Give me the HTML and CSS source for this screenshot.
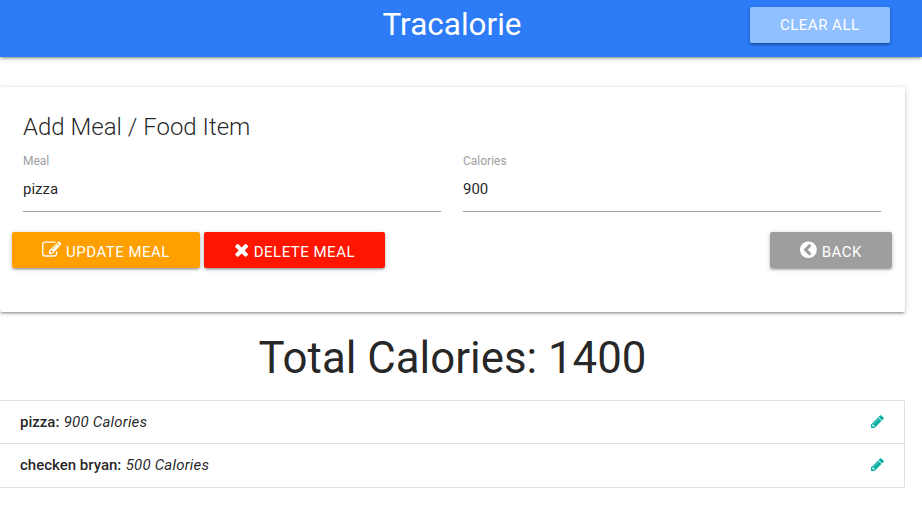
FILE: index.html
```html
<!DOCTYPE html>
<html lang="en">
<head>
<meta charset="utf-8">
<title>Tracalorie</title>
<link rel="stylesheet" href="styles.css">
</head>
<body>
<nav class="navbar">
  <span class="brand">Tracalorie</span>
  <a class="btn btn-clear">Clear All</a>
</nav>
<main class="container">
  <section class="card">
    <h1 class="card-title">Add Meal / Food Item</h1>
    <form class="fields">
      <div class="field">
        <label for="meal">Meal</label>
        <input id="meal" type="text" value="pizza">
      </div>
      <div class="field">
        <label for="calories">Calories</label>
        <input id="calories" type="text" value="900">
      </div>
    </form>
    <div class="actions">
      <a class="btn btn-update"><svg class="icon" viewBox="0 0 1792 1792"><path d="M888 1184l116-116-152-152-116 116v56h96v96h56zm440-720q-16-16-33 1l-350 350q-17 17-1 33t33-1l350-350q17-17 1-33zm80 594v190q0 119-84.5 203.5t-203.5 84.5h-832q-119 0-203.5-84.5t-84.5-203.5v-832q0-119 84.5-203.5t203.5-84.5h832q63 0 117 25 15 7 18 23 3 17-9 29l-49 49q-14 14-32 8-23-6-45-6h-832q-66 0-113 47t-47 113v832q0 66 47 113t113 47h832q66 0 113-47t47-113v-126q0-13 9-22l64-64q15-15 35-7t20 29zm-96-738l288 288-672 672h-288v-288zm444 132l-92 92-288-288 92-92q28-28 68-28t68 28l152 152q28 28 28 68t-28 68z"/></svg><span>Update Meal</span></a>
      <a class="btn btn-delete"><svg class="icon icon-times" viewBox="192 0 1408 1792"><path d="M1490 1322q0 40-28 68l-136 136q-28 28-68 28t-68-28l-294-294-294 294q-28 28-68 28t-68-28l-136-136q-28-28-28-68t28-68l294-294-294-294q-28-28-28-68t28-68l136-136q28-28 68-28t68 28l294 294 294-294q28-28 68-28t68 28l136 136q28 28 28 68t-28 68l-294 294 294 294q28 28 28 68z"/></svg><span>Delete Meal</span></a>
      <a class="btn btn-back"><svg class="icon icon-back" viewBox="128 0 1536 1792"><path d="M1037 1395l102-102q19-19 19-45t-19-45l-307-307 307-307q19-19 19-45t-19-45l-102-102q-19-19-45-19t-45 19l-454 454q-19 19-19 45t19 45l454 454q19 19 45 19t45-19zm627-499q0 209-103 385.5t-279.5 279.5-385.5 103-385.5-103-279.5-279.5-103-385.5 103-385.5 279.5-279.5 385.5-103 385.5 103 279.5 279.5 103 385.5z"/></svg><span>Back</span></a>
    </div>
  </section>
  <h2 class="total">Total Calories: 1400</h2>
  <ul class="meals">
    <li><p><strong>pizza:</strong> <em>900 Calories</em></p><svg class="pencil" viewBox="128 0 1536 1792"><path d="M491 1536l91-91-235-235-91 91v107h128v128h107zm523-928q0-22-22-22-10 0-17 7l-542 542q-7 7-7 17 0 22 22 22 10 0 17-7l542-542q7-7 7-17zm-54-192l416 416-832 832h-416v-416zm683 96q0 53-37 90l-166 166-416-416 166-165q36-38 90-38 53 0 91 38l235 234q37 39 37 91z"/></svg></li>
    <li><p><strong>checken bryan:</strong> <em>500 Calories</em></p><svg class="pencil" viewBox="128 0 1536 1792"><path d="M491 1536l91-91-235-235-91 91v107h128v128h107zm523-928q0-22-22-22-10 0-17 7l-542 542q-7 7-7 17 0 22 22 22 10 0 17-7l542-542q7-7 7-17zm-54-192l416 416-832 832h-416v-416zm683 96q0 53-37 90l-166 166-416-416 166-165q36-38 90-38 53 0 91 38l235 234q37 39 37 91z"/></svg></li>
  </ul>
</main>
</body>
</html>
```
FILE: styles.css
```css
* { box-sizing: border-box; }
body {
  margin: 0;
  background: #fff;
  color: rgba(0, 0, 0, 0.87);
  font: 15px/22.5px Roboto, sans-serif;
  overflow: hidden;
}
.navbar {
  display: grid;
  grid-template-columns: 1fr auto 1fr;
  height: 57px;
  padding: 7px 32px 0 14px;
  background: #2d7bf7;
  color: #fff;
  box-shadow: 0 2px 2px 0 rgba(0,0,0,.14), 0 3px 1px -2px rgba(0,0,0,.12), 0 1px 5px 0 rgba(0,0,0,.2);
}
.brand {
  grid-column: 2;
  font-size: 31.5px;
  line-height: 36px;
}
.btn {
  display: flex;
  align-items: center;
  height: 36px;
  padding: 0 30px;
  border-radius: 2px;
  color: #fff;
  font-size: 15px;
  letter-spacing: .5px;
  text-transform: uppercase;
  white-space: nowrap;
  box-shadow: 0 2px 2px 0 rgba(0,0,0,.14), 0 3px 1px -2px rgba(0,0,0,.12), 0 1px 5px 0 rgba(0,0,0,.2);
}
.btn-clear {
  width: 140px;
  justify-self: end;
  background: #90c0ff;
}
.container {
  width: 905px;
  padding-top: 30px;
}
.card {
  height: 225px;
  padding: 24px 12px 0;
  border-radius: 2px;
  background: #fff;
  box-shadow: 0 2px 2px 0 rgba(0,0,0,.14), 0 3px 1px -2px rgba(0,0,0,.12), 0 1px 5px 0 rgba(0,0,0,.2);
}
.card-title {
  margin: 0 11px;
  font-size: 24px;
  font-weight: 300;
  line-height: 32px;
}
.fields {
  display: grid;
  grid-template-columns: 418px 418px;
  gap: 22px;
  margin: 9px 11px 20px;
}
.field label {
  display: block;
  color: #9e9e9e;
  font-size: 12px;
  line-height: 18px;
}
.field input {
  display: block;
  width: 100%;
  height: 42px;
  padding: 0 0 3px;
  border: 0;
  border-bottom: 1px solid #9e9e9e;
  outline: 0;
  background: none;
  color: rgba(0, 0, 0, 0.87);
  font: 15px Roboto, sans-serif;
}
.actions {
  display: flex;
  gap: 4px;
}
.actions .btn { padding-left: 29.5px; }
.actions .btn span { padding-top: 5px; }
.icon {
  width: 19.5px;
  height: 19.5px;
  margin-right: 5px;
  fill: currentColor;
}
.actions .btn-delete { padding-left: 30px; }
.icon-times {
  width: 15.3px;
  margin-right: 4.5px;
}
.actions .btn-back { padding-left: 30px; }
.icon-back { width: 17px; }
.btn-update { background: #ff9f00; }
.btn-delete { background: #ff1500; }
.btn-back {
  width: 122px;
  margin-left: auto;
  margin-right: 1px;
  background: #9e9e9e;
}
.total {
  margin: 22px 0 18px;
  font-size: 43.8px;
  font-weight: 400;
  line-height: 48px;
  text-align: center;
}
.meals {
  margin: 0;
  padding: 0;
  border: 1px solid #e0e0e0;
  border-left: 0;
  border-radius: 0 2px 2px 0;
  list-style: none;
}
.meals li {
  display: flex;
  justify-content: space-between;
  align-items: center;
  height: 42px;
  padding: 0 20px;
}
.meals li + li {
  height: 44px;
  border-top: 1px solid #e0e0e0;
}
.meals p { margin: 0; }
.meals strong { font-weight: 500; }
.meals em {
  margin-left: .6px;
  letter-spacing: .2px;
}
.pencil {
  width: 12.9px;
  height: 15px;
  margin-bottom: 1.5px;
  fill: #05aea0;
}
```
